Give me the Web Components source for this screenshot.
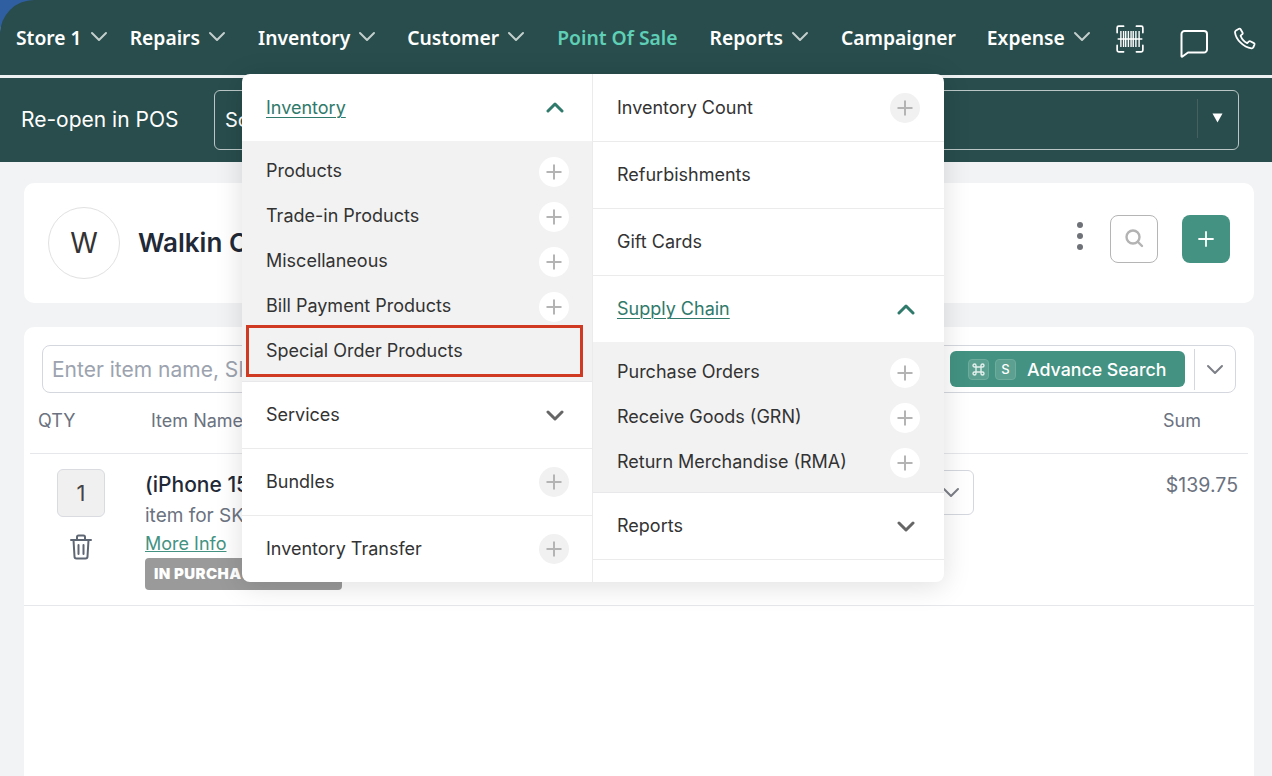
<!DOCTYPE html>
<html lang="en"><head><meta charset="utf-8"><title>POS</title>
<style>
html,body{margin:0;padding:0;height:776px;overflow:hidden;background:#f2f3f5;font-family:Inter,"Liberation Sans",sans-serif}
body{display:flex;flex-direction:column;position:relative}
</style></head><body>
<top-nav></top-nav>
<sub-bar></sub-bar>
<main-area>
  <customer-card></customer-card>
  <cart-panel></cart-panel>
</main-area>
<mega-menu></mega-menu>
<script>
const def=(name,html,setup)=>{customElements.define(name,class extends HTMLElement{
  constructor(){super();this.attachShadow({mode:'open'}).innerHTML=typeof html==='function'?html(this):html}
  connectedCallback(){if(setup&&!this._d){this._d=1;setup(this)}}
})};
const chev=(c,w,h,sw)=>`<svg width="${w}" height="${h}" viewBox="0 0 18 11" fill="none" stroke="${c}" stroke-width="${sw}" stroke-linecap="round" stroke-linejoin="round"><path d="M2 2l7 7 7-7"/></svg>`;
const chevUp=(c,w,h,sw)=>`<svg width="${w}" height="${h}" viewBox="0 0 18 11" fill="none" stroke="${c}" stroke-width="${sw}" stroke-linecap="round" stroke-linejoin="round"><path d="M2 9l7-7 7 7"/></svg>`;

def('nav-item',`<style>
:host{display:inline-flex;align-items:center;gap:8px;color:#fff;font:600 19.3px/28px "Noto Sans",sans-serif;white-space:nowrap}
:host([active]){color:#5fcfb6}
svg{display:block;margin-top:-2px}
</style><slot></slot><span id="c"></span>`,el=>{
  const c=el.shadowRoot.getElementById('c');
  if(el.hasAttribute('caret'))c.innerHTML=chev('#c3cfcd',18,11,2);else c.remove();
});

def('top-nav',`<style>
:host{display:block;flex:none;background:#2f5fa0;height:78px}
.bar{height:78px;box-sizing:border-box;background:#284d4c;border-top-left-radius:34px;box-shadow:inset 0 -3px 0 #eef1f1;display:flex;align-items:center;padding:0 0 3px 16px;gap:32px}
.store{margin-right:-10px}
.cust{margin-left:-1px}
.camp{margin-right:-1px}
.icons{display:flex;align-items:center;margin-left:-8px}
svg{display:block}
</style>
<div class="bar">
<nav-item caret class="store">Store 1</nav-item>
<nav-item caret>Repairs</nav-item>
<nav-item caret>Inventory</nav-item>
<nav-item caret class="cust">Customer</nav-item>
<nav-item active>Point Of Sale</nav-item>
<nav-item caret>Reports</nav-item>
<nav-item class="camp">Campaigner</nav-item>
<nav-item caret>Expense</nav-item>
<div class="icons">
<svg width="30" height="30" viewBox="0 0 28 28" fill="none" stroke="#fff" stroke-width="1.6" stroke-linecap="round" style="margin-top:3px"><path d="M2 8V3.5A1.5 1.5 0 0 1 3.5 2H8M20 2h4.500A1.500 1.500 0 0 1 26 3.500V8M26 20v4.500A1.500 1.500 0 0 1 24.500 26H20M8 26H3.500A1.500 1.500 0 0 1 2 24.500V20"/><path stroke-linecap="butt" stroke-width="1.300" d="M5.500 6.500v15M8 6.500v15M10 6.500v15M12.500 6.500v15M15 6.500v15M17 6.500v15M19.500 6.500v15M22.500 6.500v15"/><path d="M3 14h22" stroke-width="1.500"/></svg>
<svg width="30" height="30" viewBox="0 0 30 30" fill="none" stroke="#fff" stroke-width="2" stroke-linejoin="round" style="margin:10px 0 0 34px"><path d="M2.500 6A3 3 0 0 1 5.500 3H25a3 3 0 0 1 3 3v15.500a3 3 0 0 1-3 3H9L3.500 28.500a.6.6 0 0 1-1-.5z"/></svg>
<svg width="24" height="24" viewBox="0 0 24 24" fill="none" stroke="#fff" stroke-width="1.800" stroke-linejoin="round" style="margin:3px 0 0 24px"><path d="M3 3.500 6 1.800c.7-.4 1.200-.2 1.600.5l2 3.400c.3.600.2 1.100-.3 1.500L7.600 8.700c1 2.800 3.700 6 6.600 7.400l1.500-1.500c.500-.5 1-.6 1.600-.3l3.600 1.800c.7.400.9.900.6 1.600l-1.300 2.800c-.3.700-.9 1-1.700.9C10 20.300 2.800 12 2 5.300c-.1-.8.300-1.400 1-1.800z"/></svg>
</div>
</div>`);

def('sub-bar',`<style>
:host{display:flex;flex:none;align-items:center;height:84px;background:#284d4c;color:#fff;padding:0 33px 0 21px;box-sizing:border-box}
.t{font:400 21px/28px Inter,sans-serif;width:193px;white-space:nowrap}
.sel{flex:1;height:60px;box-sizing:border-box;border:1px solid #b9c6c5;border-radius:6px;display:flex;align-items:center;padding-left:10px;font:400 20px/28px Inter,sans-serif}
.sel span{flex:1}
.d{width:1px;height:39px;background:#47605f;margin-top:-3px}
.a{width:38px;margin-right:2px;display:flex;justify-content:center;font-size:0;margin-top:-4px}
.a svg{display:block}
</style><div class="t">Re-open in POS</div>
<div class="sel"><span>Sc</span><i class="d"></i><div class="a"><svg width="11" height="10" viewBox="0 0 12 11"><path d="M.5.500h11L6 10.500z" fill="#fff"/></svg></div></div>`);

def('main-area',`<style>
:host{display:flex;flex-direction:column;gap:24px;flex:1;min-height:0;padding:21px 18px 0 24px;box-sizing:border-box}
</style><slot></slot>`);

def('customer-card',`<style>
:host{display:flex;flex:none;align-items:center;height:120px;background:#fff;border-radius:10px;padding:0 24px;box-sizing:border-box}
.av{width:72px;height:72px;box-sizing:border-box;border:1px solid #e1e1e1;border-radius:50%;display:flex;align-items:center;justify-content:center;font:400 28px Inter,sans-serif;color:#333}
.n{flex:1;margin-left:18px;font:600 26px/32px Inter,sans-serif;color:#1f2937;white-space:nowrap}
.acts{display:flex;align-items:center;margin-top:-8px}
.k{display:flex;flex-direction:column;gap:5px;margin-right:27px;margin-top:-6px}
.k i{width:6px;height:6px;border-radius:50%;background:#6e7177}
.s{width:48px;height:48px;box-sizing:border-box;border:1px solid #b5b5b5;border-radius:8px;display:flex;align-items:center;justify-content:center;margin-right:24px}
.s svg{margin-top:-2px}
.p{width:48px;height:48px;border-radius:8px;background:#439282;display:flex;align-items:center;justify-content:center}
svg{display:block}
</style>
<div class="av">W</div><div class="n">Walkin C</div>
<div class="acts">
<div class="k"><i></i><i></i><i></i></div>
<div class="s"><svg width="20" height="20" viewBox="0 0 20 20" fill="none" stroke="#b3b3b3" stroke-width="2.400" stroke-linecap="round"><circle cx="9" cy="9" r="6.500"/><path d="M14 14l4 4"/></svg></div>
<div class="p"><svg width="16" height="16" viewBox="0 0 16 16" stroke="#fff" stroke-width="1.800" stroke-linecap="round"><path d="M8 1v14M1 8h14"/></svg></div>
</div>`);

def('cart-panel',`<style>
:host{display:block;flex:1;min-height:0;background:#fff;border-radius:10px 10px 0 0;padding-top:18px;box-sizing:border-box;color:#6b7280;font-family:Inter,sans-serif}
.search{margin:0 18px;height:48px;box-sizing:border-box;border:1px solid #d5d7de;border-radius:8px;display:flex;align-items:center;padding:0 0 0 9px}
.ph{flex:1;font-size:21px;color:#9ca3af;white-space:nowrap;overflow:hidden}
.adv{width:235px;height:36px;border-radius:6px;background:#439282;color:#fff;display:flex;align-items:center;box-sizing:border-box;padding-left:18px;font:500 17.750px Inter,sans-serif}
.key{width:21px;height:21px;border-radius:4px;background:#5ba091;border:1px solid #6eac9e;box-sizing:border-box;font:500 13px/19px Inter,sans-serif;text-align:center;margin-right:6px;display:flex;align-items:center;justify-content:center}
.lbl{margin-left:5px}
.sep{width:1px;height:41px;background:#d5d7de;margin-left:9px}
.dd{width:40px;display:flex;justify-content:center}
.head{display:flex;align-items:center;height:61px;border-bottom:1px solid #e5e7eb;font-size:18px;margin:0 6px;padding:0 0 5px 8px;box-sizing:border-box}
.head span:nth-child(1){width:113px}
.head span:nth-child(2){flex:1}
.head span:nth-child(3){margin-right:47px}
.row{display:flex;height:152px;border-bottom:1px solid #e5e7eb;box-sizing:border-box;padding:15px 16px 0 33px}
.qc{width:48px;display:flex;flex-direction:column;align-items:center;gap:17px;margin-right:40px;flex:none}
.q{width:48px;height:48px;box-sizing:border-box;background:#f0f0f0;border:1px solid #d9dbe0;border-radius:6px;display:flex;align-items:center;justify-content:center;font-size:22px;color:#444}
.info{flex:none;width:197px;white-space:nowrap;margin-right:586px}
.ti{font:500 21px/30px Inter,sans-serif;color:#1f2937;margin-top:1px}
.su{font:400 19px/30px Inter,sans-serif;color:#6b7280;margin-top:1px}
.mo{font:400 18px/26px Inter,sans-serif;color:#439282;text-decoration:underline;display:block}
.bd{height:32px;width:197px;background:#9a9a9a;border-radius:4px;color:#fff;font:900 15px/32px Inter,sans-serif;padding-left:9px;box-sizing:border-box;letter-spacing:.4px;margin-top:1px}
.box{width:46px;height:45px;box-sizing:border-box;border:1px solid #d5d7de;border-radius:6px;display:flex;align-items:center;justify-content:flex-end;padding-right:13px;flex:none;margin-top:1px}
.pr{flex:1;text-align:right;font:400 19.500px/30px Inter,sans-serif;color:#6b7280;margin-top:1px}
svg{display:block}
</style>
<div class="search"><div class="ph">Enter item name, SK</div>
<div class="adv"><span class="key"><svg width="13" height="13" viewBox="0 0 13 13" fill="none" stroke="#e3efec" stroke-width="1.400"><path d="M4 4h5v5H4zM4 4H2.500A1.500 1.500 0 1 1 4 2.500zM9 4V2.500A1.500 1.500 0 1 1 10.500 4zM9 9h1.500A1.500 1.500 0 1 1 9 10.500zM4 9v1.500A1.500 1.500 0 1 1 2.500 9z"/></svg></span><span class="key">S</span><span class="lbl">Advance Search</span></div>
<i class="sep"></i><div class="dd">${chev('#7c7f88',18,11,2)}</div></div>
<div class="head"><span>QTY</span><span>Item Name</span><span>Sum</span></div>
<div class="row">
<div class="qc"><div class="q">1</div>
<svg width="24" height="26" viewBox="0 0 24 26" fill="none" stroke="#5f6673" stroke-width="2" stroke-linecap="round" stroke-linejoin="round"><path d="M2 6h20M8 6V3a1.500 1.500 0 0 1 1.500-1.500h5A1.500 1.500 0 0 1 16 3v3M4.500 6l1 16.500A2 2 0 0 0 7.500 24.500h9a2 2 0 0 0 2-2L19.500 6M9.500 11v9M14.500 11v9"/></svg></div>
<div class="info"><div class="ti">(iPhone 15</div><div class="su">item for SK</div><a class="mo">More Info</a><div class="bd">IN PURCHA</div></div>
<div class="box">${chev('#7c7f88',18,11,2)}</div>
<div class="pr">$139.75</div>
</div>`);

def('plus-btn',`<style>
:host{display:flex;align-items:center;justify-content:center;width:30px;height:30px;border-radius:50%;background:#fff;flex:none}
:host([muted]){background:#f1f1f1}
svg{display:block}
</style><svg width="16" height="16" viewBox="0 0 16 16" stroke="#b4b4b4" stroke-width="2"><path d="M8 .500v15M.500 8h15"/></svg>`);

def('menu-row',`<style>
:host{display:flex;align-items:center;justify-content:space-between;box-sizing:border-box;height:67px;padding:0 var(--pr,23px) 0 24px;font:400 18px/24px Inter,sans-serif;color:#333;border-bottom:1px solid #ebebeb;white-space:nowrap}
:host([sub]){height:45px;border:0}
:host([sub]) #r{margin-top:2px}
:host([open]){color:#2f7a6b;border-bottom:0;text-decoration:underline;text-underline-offset:3px;text-decoration-thickness:1px}
:host([nob]){border-bottom:0}
#r{display:flex;align-items:center;justify-content:center;width:30px;height:30px}
#r>svg{display:block;margin-left:2px}
</style><slot></slot><div id="r"></div>`,el=>{
  const r=el.shadowRoot.getElementById('r');
  const k=el.getAttribute('act');
  if(k==='plus')r.innerHTML='<plus-btn></plus-btn>';
  else if(k==='muted')r.innerHTML='<plus-btn muted></plus-btn>';
  else if(k==='down')r.innerHTML=chev('#666',18,11,3);
  else if(k==='up')r.innerHTML=chevUp('#2f7a6b',18,11,3);
});

def('menu-group',`<style>
:host{display:block;background:#f2f2f2;padding:7px 0 8px;border-bottom:1px solid #e8e8ea}
</style><slot></slot>`);

def('mega-menu',`<style>
:host{position:absolute;left:242px;top:74px;width:702px;height:508px;background:#fff;border-radius:8px;box-shadow:0 4px 28px rgba(0,0,0,.13);display:grid;grid-template-columns:350px 352px}
.c{overflow:hidden;min-width:0}
.c+.c{border-left:1px solid #ebebeb;--pr:24px}
.a{position:absolute;left:4px;top:251px;width:337px;height:52px;box-sizing:border-box;border:3px solid #d13a22}
</style>
<div class="c">
<menu-row open act="up">Inventory</menu-row>
<menu-group>
<menu-row sub act="plus">Products</menu-row>
<menu-row sub act="plus">Trade-in Products</menu-row>
<menu-row sub act="plus">Miscellaneous</menu-row>
<menu-row sub act="plus">Bill Payment Products</menu-row>
<menu-row sub>Special Order Products</menu-row>
</menu-group>
<menu-row act="down">Services</menu-row>
<menu-row act="muted">Bundles</menu-row>
<menu-row act="muted" nob style="height:65px">Inventory Transfer</menu-row>
</div>
<div class="c">
<menu-row act="muted" style="height:68px">Inventory Count</menu-row>
<menu-row>Refurbishments</menu-row>
<menu-row>Gift Cards</menu-row>
<menu-row open act="up" style="height:66px">Supply Chain</menu-row>
<menu-group>
<menu-row sub act="plus">Purchase Orders</menu-row>
<menu-row sub act="plus">Receive Goods (GRN)</menu-row>
<menu-row sub act="plus">Return Merchandise (RMA)</menu-row>
</menu-group>
<menu-row act="down">Reports</menu-row>
</div>
<div class="a"></div>`);
</script>
</body></html>
